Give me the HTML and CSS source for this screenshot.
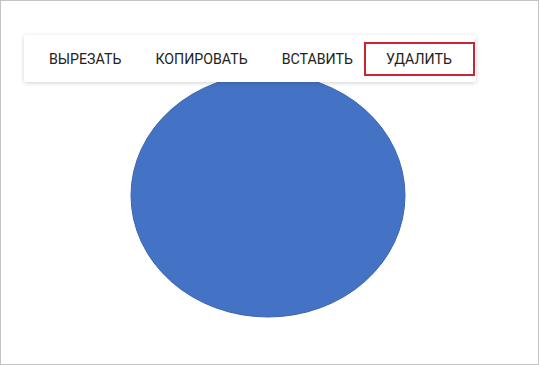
FILE: index.html
```html
<!DOCTYPE html>
<html lang="ru">
<head>
<meta charset="utf-8">
<link rel="stylesheet" href="styles.css">
</head>
<body>
<div class="frame">
  <div class="canvas">
    <svg class="shape" width="276" height="245" viewBox="0 0 276 245">
      <ellipse cx="138" cy="122.5" rx="137" ry="121.5" fill="#4472c4" stroke="#3d66b0" stroke-width="1"/>
    </svg>
  </div>
  <div class="menu">
    <button class="item">ВЫРЕЗАТЬ</button>
    <button class="item">КОПИРОВАТЬ</button>
    <button class="item">ВСТАВИТЬ</button>
    <button class="item item-active">УДАЛИТЬ</button>
  </div>
</div>
</body>
</html>
```
FILE: styles.css
```css
html, body {
  margin: 0;
  padding: 0;
  background: #ffffff;
}
.frame {
  position: relative;
  width: 539px;
  height: 365px;
  box-sizing: border-box;
  border: 1px solid #c3c3c3;
  background: #ffffff;
  overflow: hidden;
}
.canvas {
  padding: 72px 0 0 129px;
}
.shape {
  display: block;
}
.menu {
  position: absolute;
  left: 23px;
  top: 34px;
  width: 452px;
  height: 47px;
  box-sizing: border-box;
  background: #ffffff;
  box-shadow: 0 1px 4px rgba(0, 0, 0, 0.18);
  border-radius: 2px;
  display: flex;
  align-items: center;
  gap: 10px;
  padding-left: 13px;
}
.item {
  font-family: Roboto, "Liberation Sans", sans-serif;
  font-size: 14.2px;
  color: #222222;
  background: transparent;
  border: 2px solid transparent;
  padding: 0 10px;
  height: 34px;
  margin: 0;
  line-height: 30px;
  cursor: pointer;
  white-space: nowrap;
}
.item-active {
  border-color: #c9242f;
  padding: 0 0 0 20px;
  width: 111px;
  text-align: left;
  letter-spacing: 0;
  margin-left: -11px;
}
```
